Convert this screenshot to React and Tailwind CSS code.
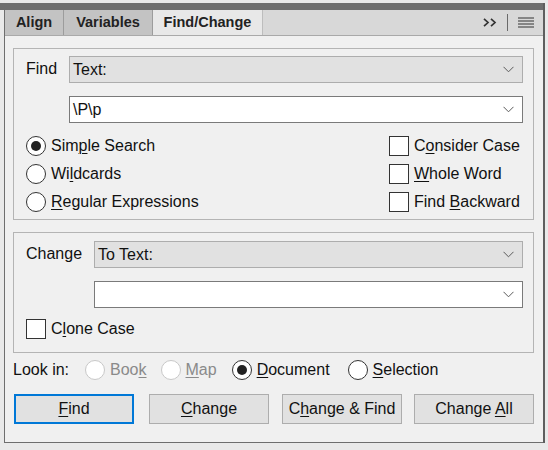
import React from "react";

const font = { fontFamily: '"Liberation Sans", Arial, sans-serif' };

function Chevron() {
  return (
    <svg width="11" height="7" viewBox="0 0 11 7" className="shrink-0">
      <path d="M0.5 0.8 L5.5 5.8 L10.5 0.8" fill="none" stroke="#5a5a5a" strokeWidth="1" />
    </svg>
  );
}

function Mn({ children }) {
  return <span className="underline underline-offset-[2px] decoration-[1px]">{children}</span>;
}

function Radio({ checked, disabled, children, className = "" }) {
  return (
    <div className={`flex items-center ${className}`}>
      <div
        className={`w-[20px] h-[20px] rounded-full border flex items-center justify-center bg-white ${
          disabled ? "border-[#c8c8c8]" : "border-[#333333]"
        }`}
      >
        {checked && <div className="w-[10px] h-[10px] rounded-full bg-[#222222]" />}
      </div>
      <span className={`ml-[5px] ${disabled ? "text-[#8a8a8a]" : "text-[#111]"}`}>{children}</span>
    </div>
  );
}

function Check({ children, className = "" }) {
  return (
    <div className={`flex items-center ${className}`}>
      <div className="w-[20px] h-[20px] border border-[#333333] bg-white" />
      <span className="ml-[5px] text-[#111]">{children}</span>
    </div>
  );
}

function Dropdown({ value, white }) {
  return (
    <div
      className={`h-[27px] flex items-center pl-[3px] pr-[8px] border ${
        white ? "bg-white border-[#7a7a7a]" : "bg-[#e1e1e1] border-[#adadad]"
      }`}
    >
      <span className="flex-1 text-[#111] leading-none">{value}</span>
      <Chevron />
    </div>
  );
}

function Button({ children, focused, className = "" }) {
  return (
    <div
      className={`w-[120px] h-[30px] flex items-center justify-center bg-[#e1e1e1] text-[#111] ${
        focused ? "border-2 border-[#0078d7]" : "border border-[#adadad]"
      } ${className}`}
    >
      <span>{children}</span>
    </div>
  );
}

export default function App() {
  return (
    <div className="w-[548px] h-[450px] bg-[#e9e9e9] pt-[3px] overflow-hidden text-[16px]" style={font}>
      <div className="w-[545px] h-[440px] border-r-2 border-[#5e5e5e] flex flex-col">
        <div className="h-[7px] bg-[#6e6e6e]" />
        <div className="flex-1 ml-[4px] border-l border-b border-[#6e6e6e] bg-[#f0f0f0] flex flex-col">
          {/* tab strip */}
          <div className="h-[26px] bg-[#d8d8d8] border-b border-[#a9a9a9] flex items-stretch text-[14.5px] font-bold text-[#222]">
            <div className="w-[59px] bg-[#c3c3c3] border-r border-[#9c9c9c] flex items-center justify-center">Align</div>
            <div className="w-[89px] bg-[#c3c3c3] border-r border-[#9c9c9c] flex items-center justify-center">Variables</div>
            <div className="w-[110px] bg-[#e8e8e8] border-r border-[#bdbdbd] flex items-center justify-center">Find/Change</div>
            <div className="flex-1 flex items-center justify-end pr-[9px]">
              <svg width="14" height="9" viewBox="0 0 14 9">
                <path d="M1 0.8 L5 4.5 L1 8.2 M8 0.8 L12 4.5 L8 8.2" fill="none" stroke="#333" strokeWidth="1.7" />
              </svg>
              <div className="w-[1px] h-[17px] bg-[#6a6a6a] ml-[10px]" />
              <svg width="16" height="11" viewBox="0 0 16 11" className="ml-[10px]">
                <path d="M0 1 H16 M0 4 H16 M0 7 H16 M0 10 H16" stroke="#333" strokeWidth="1.2" />
              </svg>
            </div>
          </div>

          <div className="pl-[8px] pr-[9px] pt-[12px] flex flex-col">
            {/* Find group */}
            <div className="h-[172px] border border-[#b4b4b4] pl-[12px] pr-[10px] pt-[7px]">
              <div className="flex items-start">
                <span className="w-[43px] pt-[1px] text-[#111]">Find</span>
                <div className="flex-1">
                  <Dropdown value="Text:" />
                </div>
              </div>
              <div className="ml-[43px] mt-[13px]">
                <Dropdown value="\P\p" white />
              </div>
              <div className="mt-[9px] flex">
                <div className="flex-1 flex flex-col">
                  <Radio checked className="h-[28px]">
                    Sim<Mn>p</Mn>le Search
                  </Radio>
                  <Radio className="h-[28px]">
                    Wi<Mn>l</Mn>dcards
                  </Radio>
                  <Radio className="h-[28px]">
                    <Mn>R</Mn>egular Expressions
                  </Radio>
                </div>
                <div className="w-[134px] flex flex-col">
                  <Check className="h-[28px]">
                    C<Mn>o</Mn>nsider Case
                  </Check>
                  <Check className="h-[28px]">
                    <Mn>W</Mn>hole Word
                  </Check>
                  <Check className="h-[28px]">
                    Find <Mn>B</Mn>ackward
                  </Check>
                </div>
              </div>
            </div>

            {/* Change group */}
            <div className="mt-[12px] h-[121px] border border-[#b4b4b4] pl-[12px] pr-[10px] pt-[8px]">
              <div className="flex items-start">
                <span className="w-[68px] pt-[1px] text-[#111]">Change</span>
                <div className="flex-1">
                  <Dropdown value="To Text:" />
                </div>
              </div>
              <div className="ml-[68px] mt-[13px]">
                <Dropdown value="" white />
              </div>
              <Check className="h-[28px] mt-[7px]">
                C<Mn>l</Mn>one Case
              </Check>
            </div>

            {/* Look in */}
            <div className="mt-[5px] h-[24px] flex items-center">
              <span className="text-[#111]">Look in:</span>
              <Radio disabled className="ml-[16px]">
                Boo<Mn>k</Mn>
              </Radio>
              <Radio disabled className="ml-[14px]">
                <Mn>M</Mn>ap
              </Radio>
              <Radio checked className="ml-[15px]">
                <Mn>D</Mn>ocument
              </Radio>
              <Radio className="ml-[18px]">
                <Mn>S</Mn>election
              </Radio>
            </div>

            {/* actions */}
            <div className="mt-[12px] flex">
              <Button focused className="ml-[1px]">
                <Mn>F</Mn>ind
              </Button>
              <Button className="ml-[15px]">
                <Mn>C</Mn>hange
              </Button>
              <Button className="ml-[13px]">
                C<Mn>h</Mn>ange &amp; Find
              </Button>
              <Button className="ml-[12px]">
                Change <Mn>A</Mn>ll
              </Button>
            </div>
          </div>
        </div>
      </div>
    </div>
  );
}
